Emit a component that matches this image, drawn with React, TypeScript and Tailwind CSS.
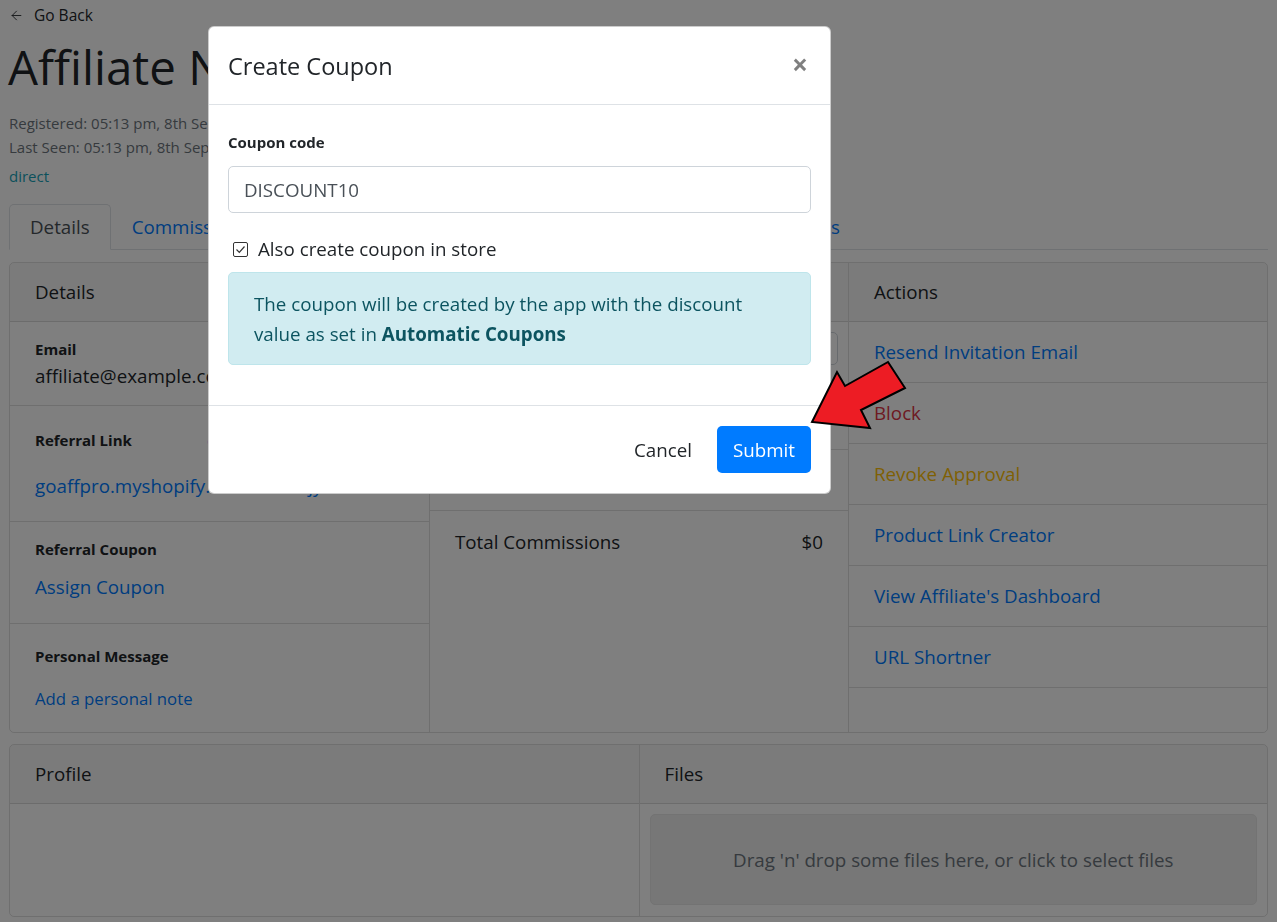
import React from 'react';
import { ArrowLeft } from 'lucide-react';

const hiddenTabs = ['Orders', 'Traffic', 'Network'];

const actions = [
  { label: 'Resend Invitation Email', color: 'text-[#007bff]' },
  { label: 'Block', color: 'text-[#dc3545]' },
  { label: 'Revoke Approval', color: 'text-[#ffc107]' },
  { label: 'Product Link Creator', color: 'text-[#007bff]' },
  { label: "View Affiliate's Dashboard", color: 'text-[#007bff]' },
  { label: 'URL Shortner', color: 'text-[#007bff]' },
];

function CardHeader({ title }: { title: string }) {
  return (
    <div className="px-[25px] py-[14px] leading-[30px] bg-[rgba(0,0,0,0.03)] border-b border-[rgba(0,0,0,0.125)]">
      {title}
    </div>
  );
}

function Tab({ label, active }: { label: string; active?: boolean }) {
  return (
    <div
      className={`h-[46px] px-[20px] flex items-center -mb-px border rounded-t-[5px] whitespace-nowrap ${
        active ? 'border-[#dee2e6] border-b-white bg-white text-[#495057]' : 'border-transparent text-[#007bff]'
      }`}
    >
      {label}
    </div>
  );
}

export default function App() {
  return (
    <div className="relative min-h-[922px] bg-white text-[#212529] px-[9px] [font-family:'Open_Sans','Noto_Sans',sans-serif] text-[18.75px] leading-[30px]">
      {/* Kopf */}
      <div className="h-[30px] flex items-center text-[15.5px]">
        <ArrowLeft size={15} strokeWidth={1.4} className="mr-[10px]" />
        <span>Go Back</span>
      </div>
      <h1 className="mt-[7px] text-[47.5px] leading-[60px] font-normal -ml-[1px]">Affiliate Name</h1>
      <div className="mt-[14px] text-[15px] leading-[24px] text-[#6c757d]">
        <div>Registered: 05:13 pm, 8th Sep 2020</div>
        <div>Last Seen: 05:13 pm, 8th Sep 2020</div>
      </div>
      <div className="mt-[5px] text-[15px] leading-[24px] text-[#17a2b8]">direct</div>

      {/* Tabs */}
      <div className="mt-[16px] flex border-b border-[#dee2e6]">
        <div className="w-[852px] flex">
          <Tab label="Details" active />
          <Tab label="Commissions" />
          <div className="flex-1 flex justify-around overflow-hidden">
            {hiddenTabs.map((t) => (
              <Tab key={t} label={t} />
            ))}
          </div>
          <Tab label="Payments" />
        </div>
      </div>

      {/* Kartengruppe oben */}
      <div className="mt-[12px] h-[471px] grid grid-cols-3 border border-[rgba(0,0,0,0.125)] rounded-[5px] overflow-hidden">
        <div className="flex flex-col">
          <CardHeader title="Details" />
          <div className="px-[25px] pt-[15px] pb-[14px] border-b border-[rgba(0,0,0,0.125)]">
            <div className="text-[15px] leading-[24px] font-bold">Email</div>
            <div className="leading-[30px]">affiliate@example.com</div>
          </div>
          <div className="px-[25px] pt-[15px] pb-[20px] border-b border-[rgba(0,0,0,0.125)]">
            <div className="h-[38px] flex items-center">
              <span className="text-[15px] font-bold w-[172px]">Referral Link</span>
              <span className="text-[15px] text-[#007bff]">copy</span>
            </div>
            <div className="mt-[12px] leading-[30px] text-[#007bff]">goaffpro.myshopify.com/?ref=ajy2</div>
          </div>
          <div className="px-[25px] pt-[15px] pb-[21px] border-b border-[rgba(0,0,0,0.125)]">
            <div className="text-[15px] leading-[24px] font-bold">Referral Coupon</div>
            <div className="mt-[11px] leading-[30px] text-[#007bff]">Assign Coupon</div>
          </div>
          <div className="flex-1 px-[25px] pt-[20px]">
            <div className="text-[15px] leading-[24px] font-bold">Personal Message</div>
            <div className="mt-[17px] text-[16.75px] leading-[27px] text-[#007bff]">Add a personal note</div>
          </div>
        </div>

        <div className="flex flex-col border-l border-[rgba(0,0,0,0.125)]">
          <CardHeader title="Stats" />
          <div className="h-[128px] p-[10px] border-b border-[rgba(0,0,0,0.125)]">
            <div className="h-[33px] border border-[#ced4da] rounded-[5px] px-[12px] text-[16px] leading-[31px] text-[#495057]">
              All time
            </div>
            <div className="mt-[14px] px-[15px] flex justify-between">
              <span>Total Sales</span>
              <span>$0</span>
            </div>
          </div>
          <div className="px-[25px] py-[15px] leading-[30px] flex justify-between border-b border-[rgba(0,0,0,0.125)]">
            <span>Total Orders</span>
            <span>0</span>
          </div>
          <div className="px-[25px] pt-[16px] pb-[15px] leading-[30px] flex justify-between">
            <span>Total Commissions</span>
            <span>$0</span>
          </div>
        </div>

        <div className="flex flex-col border-l border-[rgba(0,0,0,0.125)]">
          <CardHeader title="Actions" />
          {actions.map((a) => (
            <div key={a.label} className={`px-[25px] py-[15px] leading-[30px] border-b border-[rgba(0,0,0,0.125)] ${a.color}`}>
              {a.label}
            </div>
          ))}
        </div>
      </div>

      {/* Kartengruppe unten */}
      <div className="mt-[11px] grid grid-cols-2 border border-[rgba(0,0,0,0.125)] rounded-[5px] overflow-hidden">
        <div className="flex flex-col">
          <CardHeader title="Profile" />
        </div>
        <div className="flex flex-col border-l border-[rgba(0,0,0,0.125)]">
          <CardHeader title="Files" />
          <div className="p-[10px] pb-[11px]">
            <div className="h-[91px] flex items-center justify-center rounded-[5px] border border-[#e6e6e6] bg-[#eeeeee] text-[#6c757d]">
              Drag 'n' drop some files here, or click to select files
            </div>
          </div>
        </div>
      </div>

      {/* Modal */}
      <div className="fixed inset-0 bg-black/50">
        <div className="ml-[208px] mt-[26px] w-[623px] bg-white rounded-[6px] border border-[rgba(0,0,0,0.2)]">
          <div className="pl-[19px] pr-[20px] pt-[21px] pb-[19px] flex items-center justify-between border-b border-[#dee2e6]">
            <div className="text-[23.5px] leading-[37px]">Create Coupon</div>
            <div className="text-[28px] leading-[30px] font-bold text-black/50 mr-[2px] -mt-[6px]">×</div>
          </div>
          <div className="pl-[19px] pr-[19px] py-[20px]">
            <div className="pt-[2px] h-[34px] text-[15px] leading-[30px] font-bold">Coupon code</div>
            <div className="mt-[7px] h-[47px] border border-[#ced4da] rounded-[5px] px-[15px] leading-[45px] text-[#495057]">
              DISCOUNT10
            </div>
            <div className="mt-[21px] h-[30px] flex items-center">
              <span className="ml-[5px] w-[15px] h-[15px] border border-[#333] rounded-[2px] flex items-center justify-center">
                <svg width="11" height="11" viewBox="0 0 11 11" fill="none" stroke="#333" strokeWidth="1.2">
                  <path d="M1.5 5.5 L4.3 8.3 L9.5 2.5" />
                </svg>
              </span>
              <span className="ml-[10px]">Also create coupon in store</span>
            </div>
            <div className="mt-[8px] mb-[20px] px-[25px] pt-[16px] pb-[15px] rounded-[5px] border border-[#bee5eb] bg-[#d1ecf1] text-[#0c5460] leading-[30px]">
              The coupon will be created by the app with the discount value as set in{' '}
              <b>Automatic Coupons</b>
            </div>
          </div>
          <div className="pl-[19px] pr-[19px] pt-[20px] pb-[20px] flex justify-end items-center gap-[10px] border-t border-[#dee2e6]">
            <div className="h-[47px] px-[15px] flex items-center">Cancel</div>
            <div className="h-[47px] px-[16px] flex items-center rounded-[5px] bg-[#007bff] text-white">Submit</div>
          </div>
        </div>
        <svg className="absolute left-0 top-0" width="1277" height="922">
          <polygon
            points="812,422 837,372 845,386 888,362 905,388 861,410 870,428"
            fill="#ed1c24"
            stroke="#000"
            strokeWidth="2"
            strokeLinejoin="miter"
          />
        </svg>
      </div>
    </div>
  );
}
